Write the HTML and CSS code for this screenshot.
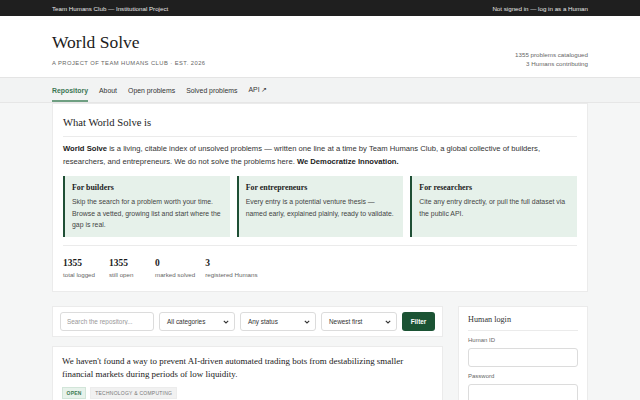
FILE: index.html
```html
<!DOCTYPE html>
<html lang="en">
<head>
    <meta charset="UTF-8">
    <meta name="viewport" content="width=device-width, initial-scale=1.0">
    <title>World Solve</title>
    <link rel="stylesheet" href="styles.css">
</head>
<body>
    <div class="topbar">
        <div class="wrap topbar-inner">
            <span>Team Humans Club — Institutional Project</span>
            <span>Not signed in — log in as a Human</span>
        </div>
    </div>

    <header class="site-header">
        <div class="wrap header-inner">
            <div>
                <h1 class="site-title">World Solve</h1>
                <div class="site-sub">A project of Team Humans Club · Est. 2026</div>
            </div>
            <div class="header-meta">
                <div>1355 problems catalogued</div>
                <div>3 Humans contributing</div>
            </div>
        </div>
    </header>

    <nav class="site-nav">
        <div class="wrap nav-inner">
            <a class="nav-link active">Repository</a>
            <a class="nav-link">About</a>
            <a class="nav-link">Open problems</a>
            <a class="nav-link">Solved problems</a>
            <a class="nav-link">API ↗</a>
        </div>
    </nav>

    <main class="wrap">
        <section class="card intro">
            <h2 class="card-title">What World Solve is</h2>
            <p class="intro-text"><b>World Solve</b> is a living, citable index of unsolved problems — written one line at a time by Team Humans Club, a global collective of builders, researchers, and entrepreneurs. We do not solve the problems here. <b>We Democratize Innovation.</b></p>
            <div class="audiences">
                <div class="audience">
                    <h3>For builders</h3>
                    <p>Skip the search for a problem worth your time. Browse a vetted, growing list and start where the gap is real.</p>
                </div>
                <div class="audience">
                    <h3>For entrepreneurs</h3>
                    <p>Every entry is a potential venture thesis — named early, explained plainly, ready to validate.</p>
                </div>
                <div class="audience">
                    <h3>For researchers</h3>
                    <p>Cite any entry directly, or pull the full dataset via the public API.</p>
                </div>
            </div>
            <div class="stats">
                <div class="stat"><div class="stat-num">1355</div><div class="stat-label">total logged</div></div>
                <div class="stat"><div class="stat-num">1355</div><div class="stat-label">still open</div></div>
                <div class="stat"><div class="stat-num">0</div><div class="stat-label">marked solved</div></div>
                <div class="stat"><div class="stat-num">3</div><div class="stat-label">registered Humans</div></div>
            </div>
        </section>

        <div class="layout">
            <div class="main-col">
                <div class="card filters">
                    <input class="field search" type="text" placeholder="Search the repository...">
                    <div class="field select"><span>All categories</span><svg width="6" height="4" viewBox="0 0 6 4"><path d="M0.8 0.8 L3 3 L5.2 0.8" fill="none" stroke="#333" stroke-width="1.1"/></svg></div>
                    <div class="field select"><span>Any status</span><svg width="6" height="4" viewBox="0 0 6 4"><path d="M0.8 0.8 L3 3 L5.2 0.8" fill="none" stroke="#333" stroke-width="1.1"/></svg></div>
                    <div class="field select"><span>Newest first</span><svg width="6" height="4" viewBox="0 0 6 4"><path d="M0.8 0.8 L3 3 L5.2 0.8" fill="none" stroke="#333" stroke-width="1.1"/></svg></div>
                    <button class="btn">Filter</button>
                </div>

                <article class="card problem">
                    <p class="problem-text">We haven't found a way to prevent AI-driven automated trading bots from destabilizing smaller financial markets during periods of low liquidity.</p>
                    <div class="tags">
                        <span class="tag tag-open">Open</span>
                        <span class="tag">Technology &amp; Computing</span>
                    </div>
                </article>
            </div>

            <aside class="card login">
                <h2 class="login-title">Human login</h2>
                <label class="login-label">Human ID</label>
                <input class="field login-input" type="text">
                <label class="login-label">Password</label>
                <input class="field login-input" type="password">
            </aside>
        </div>
    </main>
</body>
</html>
```

FILE: styles.css
```css
body {
    margin: 0;
    background-color: #f5f6f6;
    font-family: "Liberation Sans", Arial, sans-serif;
    color: #222;
}

.wrap {
    width: 536px;
    margin: 0 auto;
}

/* top strip */
.topbar {
    background-color: #1f1f1f;
    color: #e6e6e6;
    font-size: 6.2px;
    height: 16px;
}

.topbar-inner {
    display: flex;
    justify-content: space-between;
    align-items: center;
    height: 16px;
}

/* header */
.site-header {
    background-color: #fff;
    border-bottom: 1px solid #e4e4e4;
}

.header-inner {
    display: flex;
    justify-content: space-between;
    align-items: flex-end;
    padding: 16px 0 10px;
}

.site-title {
    margin: 0;
    font-family: "Liberation Serif", "Times New Roman", serif;
    font-weight: normal;
    font-size: 17.5px;
    line-height: 21px;
    color: #1c1c1c;
}

.site-sub {
    margin-top: 6px;
    font-size: 5.8px;
    line-height: 8px;
    letter-spacing: 0.45px;
    text-transform: uppercase;
    color: #666;
}

.header-meta {
    text-align: right;
    font-size: 6.2px;
    line-height: 9px;
    color: #666;
    margin-bottom: -1px;
}

/* nav */
.site-nav {
    background-color: #f2f3f3;
    border-bottom: 1px solid #e6e6e6;
}

.nav-inner {
    display: flex;
    gap: 11px;
    height: 24px;
}

.nav-link {
    display: flex;
    align-items: center;
    font-size: 6.9px;
    color: #333;
    border-bottom: 2px solid transparent;
    padding-top: 2px;
}

.nav-link.active {
    color: #3c7654;
    font-weight: bold;
    border-bottom-color: #6f9f82;
}

/* cards */
.card {
    background-color: #fff;
    border: 1px solid #ebebeb;
    box-sizing: border-box;
}

.intro {
    padding: 12px 10px 12px;
}

.card-title {
    margin: 0;
    font-family: "Liberation Serif", "Times New Roman", serif;
    font-weight: normal;
    font-size: 10.6px;
    line-height: 14px;
    color: #222;
    padding-bottom: 6px;
    border-bottom: 1px solid #ebebeb;
}

.intro-text {
    margin: 5px 0 0;
    font-size: 7.65px;
    line-height: 13px;
    color: #333;
}

.intro-text b {
    color: #1c1c1c;
}

.audiences {
    display: grid;
    grid-template-columns: repeat(3, 1fr);
    gap: 7px;
    margin-top: 8px;
    padding-bottom: 8px;
    border-bottom: 1px solid #ebebeb;
}

.audience {
    background-color: #e6f1ea;
    border-left: 2px solid #1f4f35;
    padding: 7px 8px 6px 7px;
}

.audience h3 {
    margin: 0 0 3px;
    font-family: "Liberation Serif", "Times New Roman", serif;
    font-size: 7.9px;
    line-height: 10px;
    color: #1c1c1c;
}

.audience p {
    margin: 0;
    font-size: 6.9px;
    line-height: 11.5px;
    color: #444;
}

.stats {
    display: flex;
    gap: 10px;
    margin-top: 11px;
}

.stat {
    min-width: 36px;
}

.stat-num {
    font-family: "Liberation Serif", "Times New Roman", serif;
    font-weight: bold;
    font-size: 9.5px;
    line-height: 12px;
    color: #1c1c1c;
}

.stat-label {
    margin-top: 1.5px;
    font-size: 6.2px;
    line-height: 9px;
    color: #666;
}

/* lower layout */
.layout {
    display: grid;
    grid-template-columns: 391px 130px;
    gap: 15px;
    margin-top: 14px;
    align-items: start;
}

.filters {
    display: flex;
    gap: 5px;
    padding: 5px 7px;
}

.field {
    height: 19px;
    border: 1px solid #dcdcdc;
    border-radius: 3px;
    background-color: #fff;
    box-sizing: border-box;
    font-family: inherit;
    font-size: 6.4px;
    color: #333;
}

.search {
    width: 94px;
    padding: 0 6px;
    outline: none;
}

.search::placeholder {
    color: #999;
}

.select {
    width: 76px;
    display: flex;
    align-items: center;
    justify-content: space-between;
    padding: 0 5px 0 7px;
}

.btn {
    width: 33px;
    height: 19px;
    border: none;
    border-radius: 3px;
    background-color: #1b5334;
    color: #fff;
    font-family: inherit;
    font-weight: bold;
    font-size: 6.4px;
    padding: 0;
}

.problem {
    margin-top: 9px;
    padding: 8px 9px 10px;
}

.problem-text {
    margin: 0;
    font-family: "Liberation Serif", "Times New Roman", serif;
    font-size: 8.95px;
    line-height: 13px;
    color: #222;
}

.tags {
    display: flex;
    gap: 4px;
    margin-top: 6px;
}

.tag {
    font-size: 5px;
    line-height: 10px;
    padding: 0 4px;
    text-transform: uppercase;
    letter-spacing: 0.25px;
    background-color: #f1f1f1;
    color: #777;
    border: 1px solid #ececec;
}

.tag-open {
    padding: 0 3.5px;
    background-color: #e7f2eb;
    color: #3b7a52;
    border-color: #d2e5d9;
    font-weight: bold;
}

/* login */
.login {
    padding: 7px 9px;
}

.login-title {
    margin: 0;
    font-family: "Liberation Serif", "Times New Roman", serif;
    font-weight: normal;
    font-size: 8.2px;
    line-height: 12px;
    color: #333;
    padding-bottom: 4px;
    border-bottom: 1px solid #ebebeb;
}

.login-label {
    display: block;
    margin: 5px 0 4px;
    font-size: 6px;
    line-height: 8px;
    color: #666;
}

.login-input {
    display: block;
    width: 100%;
    margin-bottom: 4px;
}
```
